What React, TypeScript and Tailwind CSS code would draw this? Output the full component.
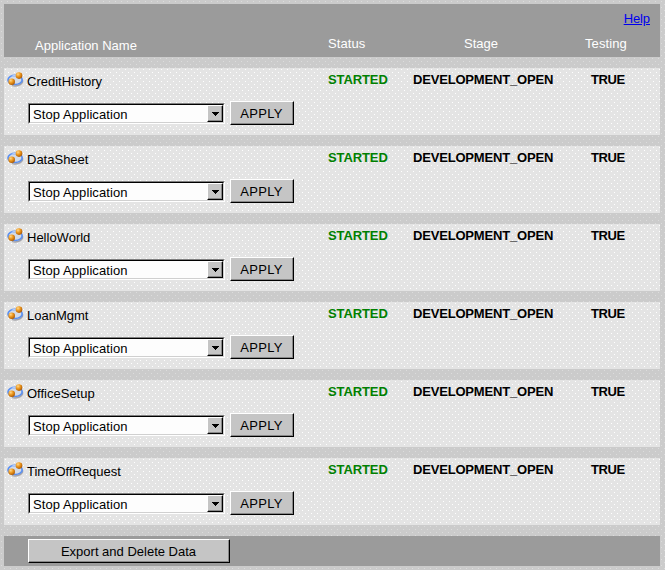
import { useState } from 'react'

type App = {
  name: string
  status: string
  stage: string
  testing: string
}

const APPS: App[] = [
  'CreditHistory',
  'DataSheet',
  'HelloWorld',
  'LoanMgmt',
  'OfficeSetup',
  'TimeOffRequest',
].map((name) => ({ name, status: 'STARTED', stage: 'DEVELOPMENT_OPEN', testing: 'TRUE' }))

const COLUMNS = 'grid grid-cols-[324px_60px_25px_140px_38px_34px]'

function AppIcon() {
  return (
    <svg width="17" height="17" viewBox="0 0 17 17" className="shrink-0">
      <defs>
        <radialGradient id="ball" cx="0.35" cy="0.3" r="0.75">
          <stop offset="0" stopColor="#ffd88c" />
          <stop offset="0.45" stopColor="#ee9a20" />
          <stop offset="1" stopColor="#a85400" />
        </radialGradient>
      </defs>
      <path d="M5 14.4C9 16 15 14.2 16 9.5" fill="none" stroke="#a4a4aa" strokeWidth="1.5" />
      <ellipse cx="8.1" cy="8.9" rx="7.1" ry="4.6" fill="#d3dbe8" stroke="#5b90f0" strokeWidth="1.7" />
      <path d="M4.6 5.6C6.6 4.4 8 4.2 9.5 4.4" fill="none" stroke="#b4cdfa" strokeWidth="1.2" />
      <circle cx="12" cy="4.6" r="3.3" fill="url(#ball)" />
      <circle cx="4.7" cy="10.8" r="3.3" fill="url(#ball)" />
    </svg>
  )
}

function ClassicButton({ label, className }: { label: string; className: string }) {
  return (
    <button
      type="button"
      className={`border border-t-white border-l-white border-r-black border-b-black bg-[#c5c5c5] text-center shadow-[inset_-1px_-1px_0_#888] ${className}`}
    >
      {label}
    </button>
  )
}

function ActionSelect() {
  const [value] = useState('Stop Application')

  return (
    <div className="h-[21px] w-[197px] border border-t-[#808080] border-l-[#808080] border-r-white border-b-white">
      <div className="flex h-full border border-t-black border-l-black border-r-[#d0d0d0] border-b-[#d0d0d0] bg-[#fdfdfd]">
        <span className="flex-1 pl-[3px] leading-5 tracking-[0.08px]">{value}</span>
        <span className="flex h-[17px] w-4 items-center justify-center border border-t-white border-l-white border-r-black border-b-black bg-[#c5c5c5] shadow-[inset_-1px_-1px_0_#888]">
          <svg width="7" height="4" viewBox="0 0 7 4" shapeRendering="crispEdges">
            <path d="M0 0H7V1H6V2H5V3H4V4H3V3H2V2H1V1H0Z" />
          </svg>
        </span>
      </div>
    </div>
  )
}

function AppRow({ app }: { app: App }) {
  return (
    <section className="h-[67px] bg-[#e4e4e4] bg-[radial-gradient(circle_at_1.5px_1.5px,#fff_0.7px,transparent_0.9px),radial-gradient(circle_at_4.5px_4.5px,#fff_0.7px,transparent_0.9px)] bg-[length:6px_6px]">
      <div className={`${COLUMNS} h-[34px]`}>
        <div className="flex pt-[3px] pl-[3px]">
          <AppIcon />
          <span className="pt-[3px] pl-[3px] leading-[15px]">{app.name}</span>
        </div>
        <b className="pt-1 leading-[15px] tracking-[-0.1px] text-[#008000]">{app.status}</b>
        <b className="col-start-4 pt-1 leading-[15px] tracking-[-0.18px]">{app.stage}</b>
        <b className="col-start-6 pt-1 leading-[15px] tracking-[-0.4px]">{app.testing}</b>
      </div>
      <div className="flex pl-6">
        <div className="pt-[1px]">
          <ActionSelect />
        </div>
        <ClassicButton label="APPLY" className="-mt-[1px] ml-[5px] h-6 w-16 pt-px pr-px pl-0 tracking-[0.3px]" />
      </div>
    </section>
  )
}

export default function AppManager() {
  return (
    <main className="h-[570px] w-[665px] overflow-hidden bg-[#cbcbcb] bg-[radial-gradient(circle_at_1.5px_1.5px,#dcdcdc_0.7px,transparent_0.9px),radial-gradient(circle_at_4.5px_4.5px,#dcdcdc_0.7px,transparent_0.9px)] bg-[length:6px_6px] p-1 font-['Liberation_Sans',Arial,sans-serif] text-[13px] text-black">
      <div className="flex w-[656px] flex-col gap-[11px]">
        <header className="h-[53px] bg-[#9b9b9b]">
          <div className="flex h-8 justify-end pt-[7px] pr-[10px]">
            <a href="#help" className="leading-[15px] tracking-[-0.1px] text-[#0000ee] underline">
              Help
            </a>
          </div>
          <div className="grid grid-cols-[324px_136px_121px_auto] leading-[15px] text-white">
            <span className="pt-0.5 pl-[31px]">Application Name</span>
            <span className="tracking-[0.1px]">Status</span>
            <span>Stage</span>
            <span className="tracking-[0.1px]">Testing</span>
          </div>
        </header>
        {APPS.map((app) => (
          <AppRow key={app.name} app={app} />
        ))}
        <footer className="h-[30px] bg-[#9b9b9b] pt-[3px] pl-6">
          <ClassicButton label="Export and Delete Data" className="block h-6 w-[202px] pt-0.5 pr-px" />
        </footer>
      </div>
    </main>
  )
}
